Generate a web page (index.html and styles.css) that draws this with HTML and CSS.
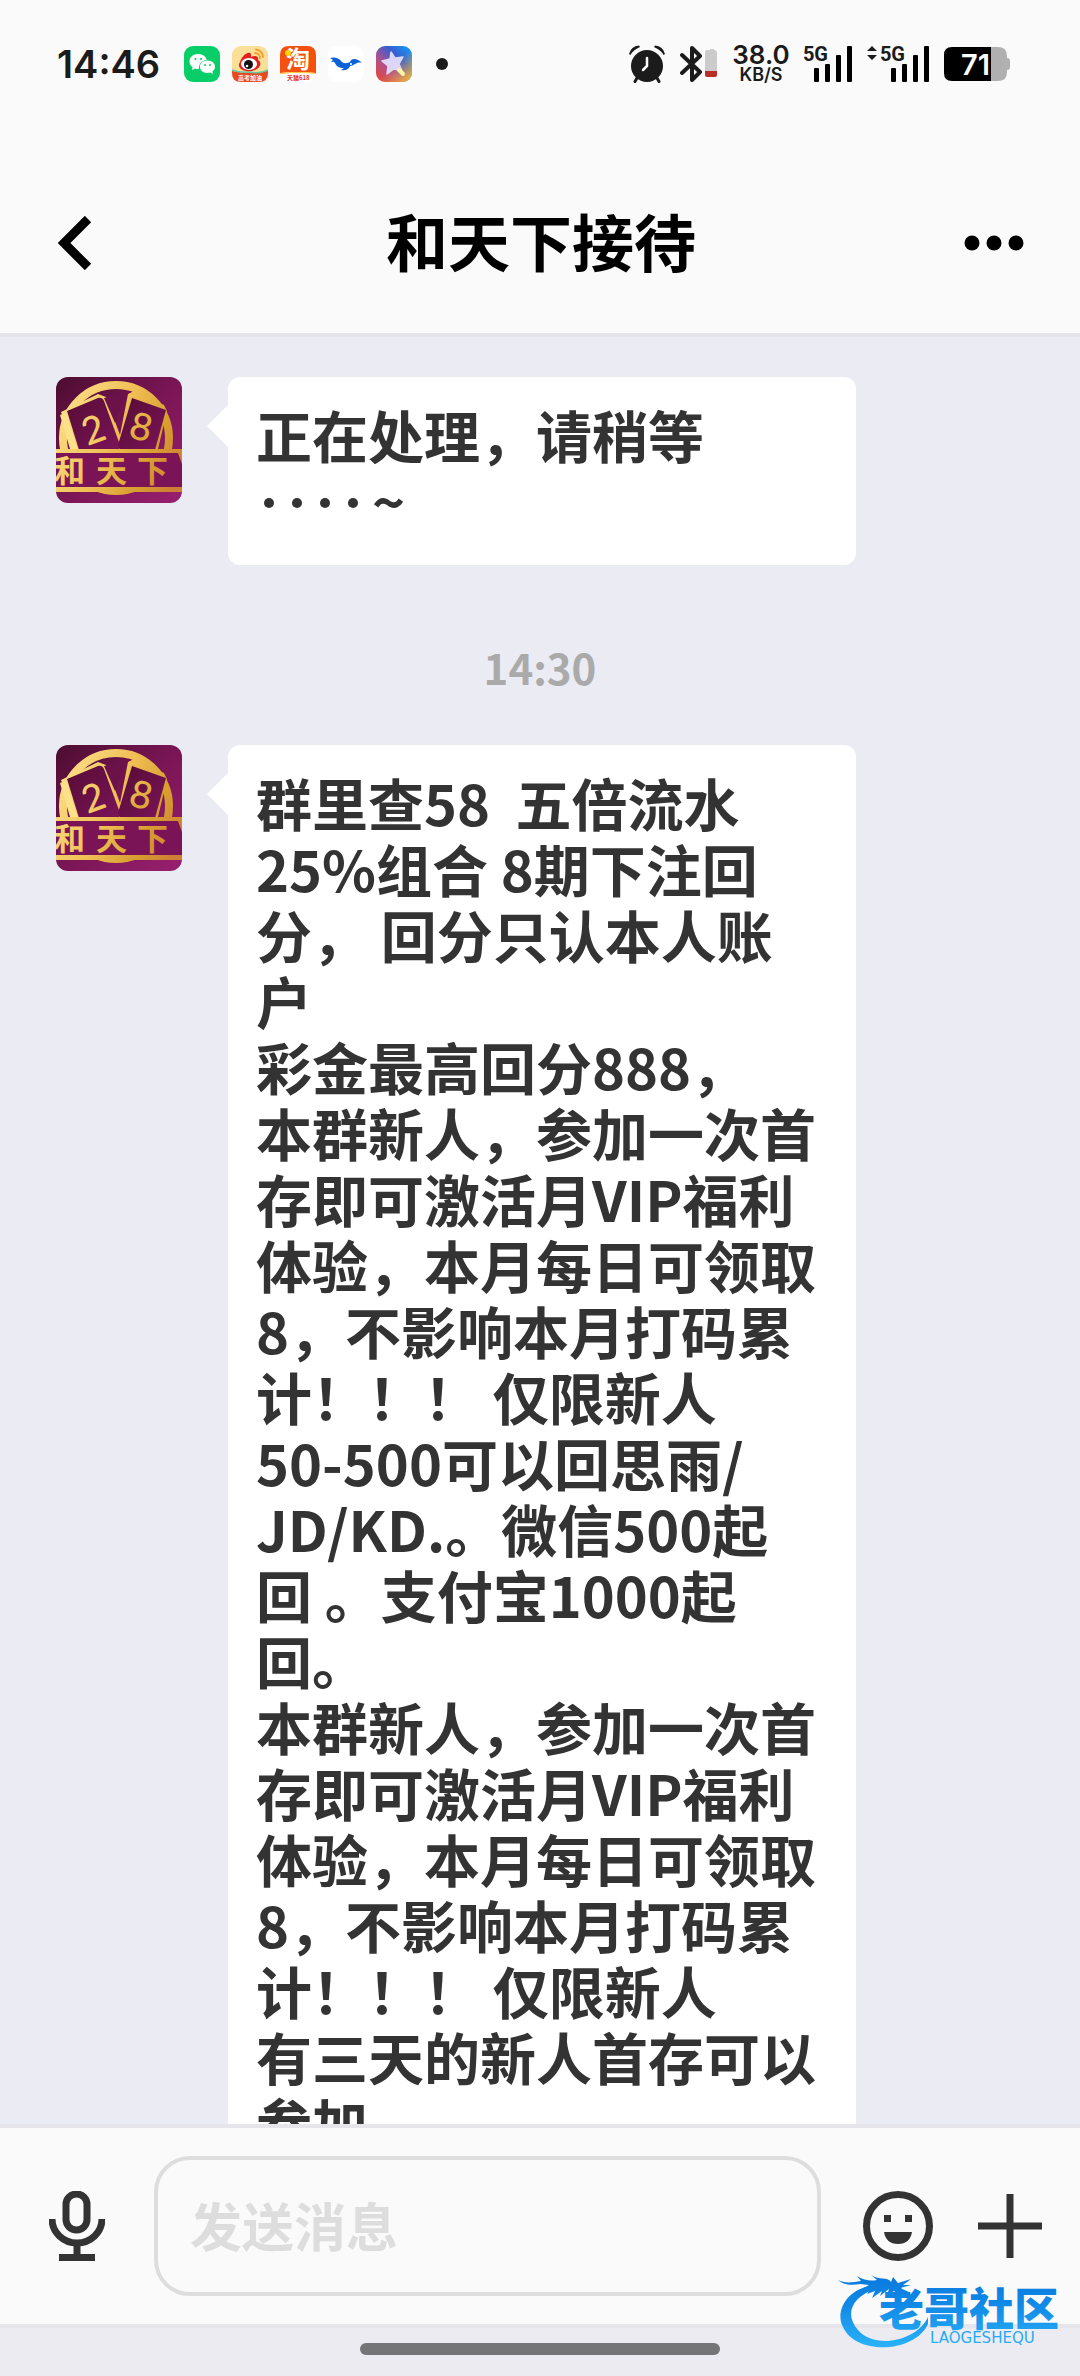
FILE: index.html
```html
<!DOCTYPE html>
<html lang="zh-CN">
<head>
  <meta charset="UTF-8" />
  <meta name="viewport" content="width=device-width, initial-scale=1" />
  <title>和天下接待</title>
  <link rel="stylesheet" href="styles.css">
</head>
<body>
  <!-- shared drawings -->
  <svg class="defs" width="0" height="0" aria-hidden="true">
    <defs>
      <linearGradient id="purple" x1="0" y1="0" x2="1" y2="1">
        <stop offset="0" stop-color="#4d0d30" />
        <stop offset=".5" stop-color="#7a1555" />
        <stop offset="1" stop-color="#98206f" />
      </linearGradient>
      <linearGradient id="card" x1="0" y1="0" x2="1" y2="1">
        <stop offset="0" stop-color="#560c35" />
        <stop offset="1" stop-color="#7b1459" />
      </linearGradient>
      <linearGradient id="gold" gradientUnits="userSpaceOnUse" x1="0" y1="30" x2="126" y2="90">
        <stop offset="0" stop-color="#fce08a" />
        <stop offset=".45" stop-color="#f0bf55" />
        <stop offset=".75" stop-color="#d9a030" />
        <stop offset="1" stop-color="#cf7f35" />
      </linearGradient>
      <symbol id="avatar" viewBox="0 0 126 126">
        <rect width="126" height="126" fill="url(#purple)" />
        <circle cx="60" cy="61" r="53" fill="none" stroke="url(#gold)" stroke-width="8" />
        <path d="M5 35 42 17 50 20 64 58 72 17 78 14 108 28 111 34 102 72H18Z" fill="url(#gold)" />
        <path d="M4 38 10 36 22 72H14Z" fill="#fce08a" />
        <path d="M11 34 42 21Q46 20 48 24L64 68 63 73H23Z" fill="url(#card)" />
        <path d="M48 21 69 16 59 46Z" fill="#6b124b" />
        <path d="M76 21 110 33 99 73H64L62 68Z" fill="url(#card)" />
        <text class="avatar-digit" x="26" y="66" transform="rotate(-20 37 52)" fill="url(#gold)">2</text>
        <text class="avatar-digit" x="74" y="63" transform="rotate(14 84 50)" fill="url(#gold)">8</text>
        <rect x="0" y="74" width="126" height="38" fill="#7b1457" />
        <path d="M0 72H126V76H0ZM0 110H126V115H0ZM122 76H126V87Z" fill="url(#gold)" />
        <text class="avatar-name" y="105" fill="url(#gold)"><tspan x="-2">和</tspan><tspan x="40">天</tspan><tspan x="81">下</tspan></text>
      </symbol>
      <symbol id="bars" viewBox="0 0 38 36">
        <rect x="0" y="22" width="5" height="14" rx="1" />
        <rect x="11" y="18" width="5" height="18" rx="1" />
        <rect x="22" y="9" width="5" height="27" rx="1" />
        <rect x="33" y="0" width="5" height="36" rx="1" />
      </symbol>
    </defs>
  </svg>

  <div class="phone">
    <div class="status">
      <div class="status-left">
        <span class="clock">14:46</span>
        <div class="apps">
          <svg class="app" viewBox="0 0 36 36">
            <rect width="36" height="36" rx="9" fill="#07ce66" />
            <path d="M14 8C9 8 5.500 11.300 5.500 15.500C5.500 17.800 6.700 19.800 8.600 21.200L8 24L11 22.400C12.500 22.900 13.500 23 15 22.800C14.500 17.500 18.500 14 22.800 14C22 10.300 18.300 8 14 8Z" fill="#fff" />
            <path d="M23.500 14.500C19 14.500 16 17.300 16 20.800C16 24.300 19 27 23.500 27L26.300 26.600L29 28L28.400 25.500C30 24.400 31 22.700 31 20.800C31 17.300 28 14.500 23.500 14.500Z" fill="#fff" />
            <g fill="#07ce66"><circle cx="11.500" cy="13" r="1.100" /><circle cx="17" cy="13" r="1.100" /><circle cx="21" cy="19" r="1" /><circle cx="26" cy="19" r="1" /></g>
          </svg>
          <svg class="app" viewBox="0 0 36 36">
            <rect width="36" height="36" rx="9" fill="#fadf98" />
            <path d="M0 25Q18 29 36 25V27Q36 36 27 36H9Q0 36 0 27Z" fill="#e8491f" />
            <path d="M0 24Q8 27 18 26Q28 28 36 24" fill="none" stroke="#62c7a2" stroke-width="1.500" />
            <path d="M8 16C10 10 15 6 18 7C20 8 19 10 19 11C23 9 27 10 26 14C30 16 29 22 23 24C15 27 6 24 7 18Z" fill="#e32020" />
            <ellipse cx="17" cy="18" rx="8" ry="6" fill="#fff" />
            <circle cx="16.500" cy="18.500" r="4.500" fill="#111" /><circle cx="15" cy="20" r="1.300" fill="#fff" />
            <path d="M23 7A5 5 0 0 1 28 12M24 3.500A8 8 0 0 1 31 11" fill="none" stroke="#f29a28" stroke-width="1.800" stroke-linecap="round" />
            <text class="app-tag" x="6" y="34" fill="#fff">高考加油</text>
          </svg>
          <svg class="app" viewBox="0 0 36 36">
            <rect width="36" height="36" rx="9" fill="#fff" />
            <path d="M9 0H27Q36 0 36 9V27Q18 25 0 27V9Q0 0 9 0Z" fill="#f4500f" />
            <path d="M0 27Q18 25 36 27V28Q18 26 0 28Z" fill="#ffc23a" />
            <text class="app-name" x="6" y="22" fill="#fff">淘</text>
            <circle cx="8" cy="7" r="3" fill="#ffd400" />
            <text class="app-tag" x="7" y="34" fill="#e5321c">天猫618</text>
          </svg>
          <svg class="app" viewBox="0 0 36 36">
            <rect width="36" height="36" rx="9" fill="#fff" />
            <path d="M2 12C6 11 10 11 14 16C17 18 20 17 22 16C23 13 28 11 34 17C31 16 29 17 27 18C25 19 24 20 22 20C21 23 18 25 13 24L16 22C11 22 8 20 7 17C6 15 4 16 3 16L5 14Z" fill="#0b62d6" />
            <circle cx="23" cy="18" r="1" fill="#fff" />
          </svg>
          <svg class="app" viewBox="0 0 36 36">
            <defs>
              <linearGradient id="themeA" x1="0" y1="1" x2="1" y2="0">
                <stop offset="0" stop-color="#f0452b" /><stop offset=".35" stop-color="#b0518b" /><stop offset=".65" stop-color="#375ed0" /><stop offset="1" stop-color="#0ca2fa" />
              </linearGradient>
              <linearGradient id="themeB" x1=".3" y1=".3" x2="1" y2="1">
                <stop offset=".3" stop-color="#ffb02e" stop-opacity="0" /><stop offset="1" stop-color="#ffc52e" />
              </linearGradient>
            </defs>
            <rect width="36" height="36" rx="9" fill="url(#themeA)" />
            <rect width="36" height="36" rx="9" fill="url(#themeB)" />
            <path d="M15 6 19 12 27 11 23 18 26 25 18 23 11 28 12 20 6 15 14 13Z" fill="#e8e4ff" stroke="#e8e4ff" stroke-width="1.500" stroke-linejoin="round" opacity=".9" />
            <path d="M23 24 27 28" stroke="#fff3a8" stroke-width="4" stroke-linecap="round" />
          </svg>
        </div>
        <span class="more-dot"></span>
      </div>

      <div class="status-right">
        <svg class="alarm" viewBox="0 0 36 38">
          <circle cx="18" cy="21" r="16" fill="#1b1b1b" />
          <path d="M8 33 6 36.500M28 33 30 36.500" stroke="#1b1b1b" stroke-width="3" stroke-linecap="round" />
          <path d="M0 9Q2 1 10 0.500L11 2Q4 5 1.500 10ZM36 9Q34 1 26 0.500L25 2Q32 5 34.500 10Z" fill="#1b1b1b" />
          <path d="M18 13V21L14 25" fill="none" stroke="#fff" stroke-width="2.500" stroke-linecap="round" />
        </svg>
        <svg class="bluetooth" viewBox="0 0 38 38">
          <path d="M2 10 20 27 12 35V3L20 11 2 28" fill="none" stroke="#1b1b1b" stroke-width="4" stroke-linejoin="round" stroke-linecap="round" />
          <path d="M27 5H30V4H34V5Q37 5 37 8V27H25V8Q25 5 27 5Z" fill="#cbcbcb" />
          <path d="M25 26H37V30Q37 32 35 32H27Q25 32 25 30Z" fill="#b92d27" />
        </svg>
        <div class="speed"><span class="rate">38.0</span><span class="unit">KB/S</span></div>
        <div class="signal"><span class="net">5G</span><svg class="bars"><use href="#bars" /></svg></div>
        <div class="signal">
          <svg class="updown" viewBox="0 0 10 14"><path d="M5 0 10 5H0ZM5 14 0 9H10Z" fill="#1b1b1b" /></svg>
          <span class="net">5G</span><svg class="bars"><use href="#bars" /></svg>
        </div>
        <svg class="battery" viewBox="0 0 66 34">
          <path d="M47 0H54Q63 0 63 9V11Q66 11 66 14V20Q66 23 63 23V25Q63 34 54 34H47Z" fill="#b0b0b0" />
          <path d="M8 0H47V34H8Q0 34 0 26V8Q0 0 8 0Z" fill="#000" />
          <text class="level" x="17" y="28" fill="#fff">71</text>
        </svg>
      </div>
    </div>

    <header class="topbar">
      <button class="icon-btn" type="button" aria-label="返回">
        <svg class="back" viewBox="0 0 34 54"><path d="M30 3 6 27 30 51" fill="none" stroke="#000" stroke-width="9" /></svg>
      </button>
      <h1>和天下接待</h1>
      <button class="icon-btn" type="button" aria-label="更多">
        <svg class="dots" viewBox="0 0 60 16"><circle cx="8" cy="8" r="7.500" /><circle cx="30" cy="8" r="7.500" /><circle cx="52" cy="8" r="7.500" /></svg>
      </button>
    </header>

    <main class="chat">
      <div class="message">
        <svg class="avatar"><use href="#avatar" /></svg>
        <div class="bubble">正在处理，请稍等<br><span class="ellipsis"><i></i><i></i><i></i><i></i></span>~</div>
      </div>

      <time class="time">14:30</time>

      <div class="message">
        <svg class="avatar"><use href="#avatar" /></svg>
        <div class="bubble">群里查58&nbsp; 五倍流水<br>
          25%组合 8期下注回<br>
          分， 回分只认本人账<br>
          户<br>
          彩金最高回分888，<br>
          本群新人，参加一次首<br>
          存即可激活月VIP福利<br>
          体验，本月每日可领取<br>
          8，不影响本月打码累<br>
          计！！！ 仅限新人<br>
          50-500可以回思雨/<br>
          JD/KD.。微信500起<br>
          回 。支付宝1000起<br>
          回。<br>
          本群新人，参加一次首<br>
          存即可激活月VIP福利<br>
          体验，本月每日可领取<br>
          8，不影响本月打码累<br>
          计！！！ 仅限新人<br>
          有三天的新人首存可以<br>
          参加</div>
      </div>
    </main>

    <form class="composer">
      <button class="icon-btn" type="button" aria-label="语音">
        <svg class="mic" viewBox="0 0 56 70">
          <rect x="17" y="3" width="21" height="36" rx="10.500" fill="none" stroke="#333" stroke-width="7" />
          <path d="M3 28A25 24 0 0 0 53 28M28 52V66M10 66.500H46" fill="none" stroke="#333" stroke-width="7" />
        </svg>
      </button>
      <input class="field" type="text" placeholder="发送消息" aria-label="发送消息" />
      <button class="icon-btn" type="button" aria-label="表情">
        <svg class="smile" viewBox="0 0 70 70">
          <circle cx="35" cy="35" r="31.500" fill="none" stroke="#333" stroke-width="7" />
          <path d="M21 24H28V31H21ZM42 24H49V31H42ZM21 41H49Q47 53 35 53Q23 53 21 41Z" fill="#333" />
        </svg>
      </button>
      <button class="icon-btn" type="button" aria-label="添加">
        <svg class="plus" viewBox="0 0 64 64"><path d="M32 0V64M0 32H64" stroke="#333" stroke-width="7" /></svg>
      </button>
    </form>

    <div class="navbar"><span class="handle"></span></div>

    <svg class="watermark" viewBox="0 0 226 76">
      <defs>
        <linearGradient id="blue" gradientUnits="userSpaceOnUse" x1="0" y1="0" x2="0" y2="76">
          <stop offset="0" stop-color="#0878dc" /><stop offset=".4" stop-color="#1189e6" /><stop offset="1" stop-color="#2bb5fa" />
        </linearGradient>
      </defs>
      <g fill="url(#blue)">
        <path d="M31 12C8 17-3 38 5 53C18 82 77 79 90 50V43C79 67 37 76 20 56C5 39 16 22 37 15Z" />
        <path d="M0 6C8 10 15 8 23 7L19 2C27 7 33 7 39 6L33 1C42 7 49 2 53 8L55 3L60 9L73 5L65 11H73L62 14L71 18H63L56 17L49 21L51 15L42 22L44 17L34 24L37 17L29 20L33 14L26 14L31 11L22 10C12 12 4 10 0 6Z" />
        <text class="wm-name" x="41" y="52">老哥社区</text>
        <text class="wm-latin" x="92" y="69">LAOGESHEQU</text>
      </g>
    </svg>
  </div>
</body>
</html>
```

FILE: styles.css
```css
* {
  box-sizing: border-box;
}
body {
  margin: 0;
  background: #ebebf1;
  color: #333;
  font-family: "Noto Sans CJK SC", sans-serif;
}
svg {
  display: block;
  flex: none;
}
button {
  border: none;
  background: none;
  padding: 0;
  cursor: pointer;
}
.defs {
  position: absolute;
}
.phone {
  position: relative;
  display: flex;
  flex-direction: column;
  height: 100vh;
  overflow: hidden;
}

/* status bar */
.status {
  display: flex;
  justify-content: space-between;
  padding: 44px 70px 69px 57px;
  background: #fafafa;
  color: #1b1b1b;
  font-family: Inter, sans-serif;
  font-weight: 600;
}
.status-left,
.status-right {
  display: flex;
  align-items: center;
  height: 40px;
}
.clock {
  width: 127px;
  font-size: 38px;
}
.apps {
  display: flex;
  gap: 12px;
}
.app {
  width: 36px;
  height: 36px;
}
.app-name {
  font: 700 24px "Noto Sans CJK SC", sans-serif;
}
.app-tag {
  font: 700 6px "Noto Sans CJK SC", sans-serif;
}
.more-dot {
  width: 12px;
  height: 12px;
  margin-left: 24px;
  border-radius: 50%;
  background: #1b1b1b;
}
.status-right {
  gap: 15px;
}
.alarm {
  width: 36px;
  height: 38px;
}
.bluetooth {
  width: 38px;
  height: 38px;
}
.speed {
  display: flex;
  flex-direction: column;
  align-items: center;
  width: 56px;
}
.rate {
  font-size: 26px;
  line-height: 22px;
}
.unit {
  font-size: 18px;
  line-height: 18px;
}
.signal {
  position: relative;
  display: flex;
  justify-content: flex-end;
  width: 48px;
}
.signal + .signal {
  width: 62px;
}
.bars {
  width: 38px;
  height: 36px;
}
.net {
  position: absolute;
  top: 0;
  right: 24px;
  font: 700 20px/16px Roboto, sans-serif;
}
.updown {
  position: absolute;
  top: 0;
  left: 0;
  width: 10px;
  height: 14px;
}
.battery {
  width: 66px;
  height: 34px;
}
.level {
  font: 600 29px Inter, sans-serif;
}

/* title bar */
.topbar {
  display: flex;
  align-items: center;
  justify-content: space-between;
  height: 184px;
  padding: 0 56px 0 58px;
  background: #fafafa;
  border-bottom: 4px solid #e5e5eb;
}
.topbar h1 {
  margin: 0;
  padding-bottom: 6px;
  color: #000;
  font-size: 62px;
  font-weight: 700;
  line-height: 80px;
}
.topbar .icon-btn {
  display: flex;
  width: 62px;
}
.topbar .icon-btn:last-child {
  justify-content: flex-end;
}
.back {
  width: 34px;
  height: 54px;
}
.dots {
  width: 60px;
  height: 16px;
}

/* conversation */
.chat {
  flex: 1;
  min-height: 0;
  overflow: hidden;
  padding: 40px 56px 0;
  background: #ebebf4;
}
.message {
  display: flex;
  align-items: flex-start;
  gap: 46px;
  padding-right: 168px;
}
.avatar {
  width: 126px;
  height: 126px;
  border-radius: 12px;
}
.avatar-digit {
  font: 500 38px Lato, sans-serif;
}
.avatar-name {
  font: 700 31px "Noto Sans CJK SC", sans-serif;
}
.bubble {
  position: relative;
  flex: 1;
  padding: 24px 28px 32px;
  border-radius: 12px;
  background: #fff;
  font-size: 56px;
  font-weight: 700;
  line-height: 66px;
  white-space: nowrap;
}
.bubble::before {
  content: "";
  position: absolute;
  top: 28px;
  left: -21px;
  border: solid transparent;
  border-width: 21px 21px 21px 0;
  border-right-color: #fff;
}
.ellipsis {
  display: inline-flex;
  gap: 18px;
  padding: 0 14px 0 8px;
  vertical-align: 16px;
}
.ellipsis i {
  width: 10px;
  height: 10px;
  border-radius: 50%;
  background: #333;
}
.time {
  display: block;
  padding: 72px 0 48px;
  color: #aaa;
  font: 700 42px/60px "Noto Sans CJK SC", sans-serif;
  text-align: center;
}

/* message box */
.composer {
  display: flex;
  align-items: center;
  height: 204px;
  padding: 0 38px 0 49px;
  background: #fafafa;
  border: solid #e5e5eb;
  border-width: 4px 0;
}
.field {
  flex: 1;
  min-width: 0;
  height: 140px;
  margin: 0 42px 0 49px;
  padding: 0 32px 4px;
  border: 4px solid #ddd;
  border-radius: 36px;
  background: none;
  color: #333;
  font: 700 52px "Noto Sans CJK SC", sans-serif;
  outline: none;
}
.field::placeholder {
  color: #ddd;
}
.mic {
  width: 56px;
  height: 70px;
}
.smile {
  width: 70px;
  height: 70px;
}
.plus {
  width: 64px;
  height: 64px;
  margin-left: 45px;
}
.navbar {
  display: flex;
  justify-content: center;
  height: 48px;
  padding-top: 15px;
  background: #ebebf1;
}
.handle {
  width: 33.333%;
  height: 12px;
  border-radius: 6px;
  background: #757577;
}

.watermark {
  position: absolute;
  right: 16px;
  bottom: 26px;
  width: 226px;
  height: 76px;
}
.wm-name {
  font: 900 45px "Noto Sans CJK SC", sans-serif;
}
.wm-latin {
  font: 400 15px "DejaVu Sans", sans-serif;
}
```
